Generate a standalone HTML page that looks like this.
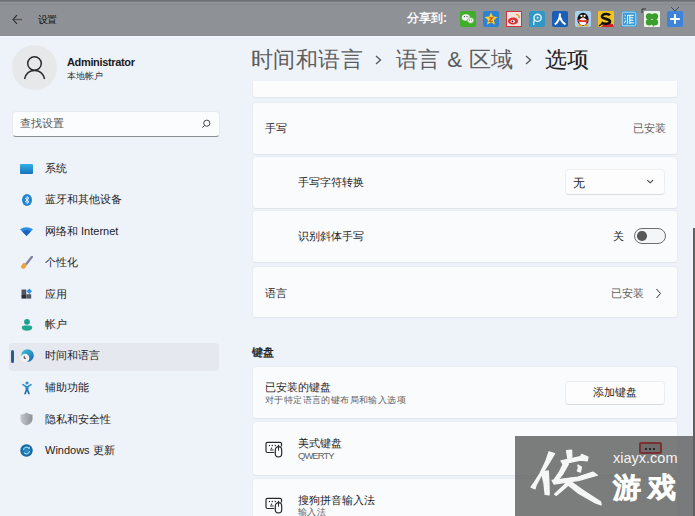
<!DOCTYPE html>
<html><head><meta charset="utf-8">
<style>
*{margin:0;padding:0;box-sizing:border-box}
html,body{width:695px;height:516px;overflow:hidden}
body{position:relative;background:#eef2f9;font-family:"Liberation Sans",sans-serif;color:#1b1b1b}
.abs{position:absolute}
.t{position:absolute;white-space:nowrap;line-height:1}
#title{left:0;top:0;width:695px;height:36px;background:#8e9195}
.card{position:absolute;left:252px;width:426px;background:#fafbfd;border-radius:4px;border:1px solid #e9ecf0;border-bottom-color:#e2e5e9}
.nav{position:absolute;left:45px;font-size:11px;color:#1d1d1d}
.ico{position:absolute;top:11px;width:16px;height:16px}
.c11{font-size:11px;color:#262626}
</style></head><body>

<div id="title" class="abs">
  <div class="abs" style="left:0;top:0;width:695px;height:1px;background:#6c6f73"></div>
  <div class="abs" style="left:0;top:1px;width:695px;height:1px;background:#7c7f83"></div>
  <div class="abs" style="left:0;top:4px;width:695px;height:1px;background:#878a8e"></div>
  <div class="abs" style="left:0;top:35px;width:695px;height:1px;background:#8a8d91"></div>
  <div class="abs" style="left:0;top:36px;width:695px;height:1px;background:#f5f8fd"></div>
  <svg class="abs" style="left:12px;top:14px" width="11" height="11" viewBox="0 0 11 11"><path d="M5 1.2 L1 5.5 L5 9.8" fill="none" stroke="#2a2a2a" stroke-width="1.1"/><path d="M1.3 5.5 H10" stroke="#555" stroke-width="1.3"/></svg>
  <div class="t" style="left:38px;top:15px;font-size:10px;letter-spacing:-0.8px;color:#111">设置</div>
  <div class="t" style="left:407px;top:12px;font-size:12px;font-weight:bold;color:#fafafa">分享到:</div>
  <!-- share icons -->
  <svg class="ico" style="left:460px" viewBox="0 0 16 16"><rect width="16" height="16" rx="2" fill="#3fae2a"/><ellipse cx="5.8" cy="6.5" rx="4" ry="3.3" fill="#f4f4f4"/><circle cx="4.4" cy="5.6" r=".6" fill="#333"/><circle cx="7" cy="5.6" r=".6" fill="#333"/><ellipse cx="10.6" cy="9.4" rx="3.3" ry="2.8" fill="#f4f4f4" stroke="#3fae2a" stroke-width=".6"/><circle cx="9.5" cy="9" r=".5" fill="#333"/><circle cx="11.7" cy="9" r=".5" fill="#333"/></svg>
  <svg class="ico" style="left:483px" viewBox="0 0 16 16"><rect width="16" height="16" rx="2" fill="#2d82d6"/><path d="M8 1.5 L9.9 5.6 L14.5 6 L11 9 L12 13.8 L8 11.3 L4 13.8 L5 9 L1.5 6 L6.1 5.6Z" fill="#f8d22c"/><path d="M6.3 6.9 H9.6 L6.4 10.2 H9.8" fill="none" stroke="#d0452b" stroke-width="1.1"/></svg>
  <svg class="ico" style="left:506px" viewBox="0 0 16 16"><rect width="16" height="16" rx="1" fill="#f3e0dc"/><rect x=".5" y=".5" width="15" height="15" fill="none" stroke="#c9363b" stroke-width="1"/><ellipse cx="7" cy="10" rx="5" ry="3.6" fill="#e22b2f"/><ellipse cx="6.7" cy="10.4" rx="2.2" ry="1.6" fill="#fff"/><circle cx="6.5" cy="10.5" r=".9" fill="#222"/><path d="M10 3.5 A3 3 0 0 1 13.2 7" fill="none" stroke="#f08a1c" stroke-width="1.2"/></svg>
  <svg class="ico" style="left:529px" viewBox="0 0 16 16"><rect width="16" height="16" rx="2" fill="#2f98c6"/><circle cx="8.6" cy="6.8" r="3.6" fill="none" stroke="#eaf6fb" stroke-width="1.4"/><circle cx="8.6" cy="6.8" r="1" fill="#eaf6fb"/><path d="M5.3 8.5 C4.8 10.5 4.6 12 4.8 14" fill="none" stroke="#eaf6fb" stroke-width="1.3"/></svg>
  <svg class="ico" style="left:552px" viewBox="0 0 16 16"><rect width="16" height="16" rx="2" fill="#1a5fb5"/><path d="M8 2.5 C8 8 6 11 2.8 13.5 M8 6 C9 9.5 11 12 13.5 13.5" fill="none" stroke="#fff" stroke-width="2"/></svg>
  <svg class="ico" style="left:575px" viewBox="0 0 16 16"><rect width="16" height="16" rx="2" fill="#a9d2ec"/><ellipse cx="8" cy="8.3" rx="5.6" ry="6.6" fill="#141414"/><ellipse cx="8" cy="10.6" rx="3.9" ry="3.6" fill="#f6f6f6"/><circle cx="6.4" cy="4.8" r="1.1" fill="#fff"/><circle cx="9.6" cy="4.8" r="1.1" fill="#fff"/><path d="M6.5 6.3 H9.5 L8 7.6Z" fill="#f2a516"/><path d="M2.8 8.5 C6 9.6 10 9.6 13.2 8.5 L13 10.5 C10 11.3 6 11.3 3 10.5Z" fill="#e3302b"/><path d="M10 10 L11.5 13 L12.5 11Z" fill="#e3302b"/><ellipse cx="5" cy="14.6" rx="2.4" ry="1" fill="#f2a516"/><ellipse cx="11" cy="14.6" rx="2.4" ry="1" fill="#f2a516"/></svg>
  <svg class="ico" style="left:598px" viewBox="0 0 16 16"><rect width="16" height="16" rx="1" fill="#f4c41e"/><path d="M3 16 C6 12 10 12 15 13 L16 16Z" fill="#d3232a"/><path d="M12 4.2 C10 2.2 3.5 2.6 4 5.8 C4.5 8.3 12 7.5 12 10.5 C12 13 6 13.6 3.5 11.5" fill="none" stroke="#111" stroke-width="2.6"/><path d="M1 15 L5 12" stroke="#111" stroke-width="1.5"/></svg>
  <svg class="ico" style="left:621px" viewBox="0 0 16 16"><rect width="16" height="16" rx="2" fill="#3d9ad6"/><rect x="1.2" y="1.2" width="13.6" height="13.6" rx="1.5" fill="none" stroke="#d6ecf8" stroke-width=".8"/><path d="M3.5 4 L4.8 5 M3.3 7.2 L4.6 8 M3.3 12.2 L4.8 9.5 M6.5 4 V12 Q6.5 13 5.8 13.3 M6.5 4.3 H12.8 M8.8 4.3 V13 M8.8 6.8 H12.3 M8.8 9.2 H12.3 M8.8 11.8 H12.8" fill="none" stroke="#fff" stroke-width="1"/></svg>
  <svg class="abs" style="left:641px;top:8px" width="19" height="20" viewBox="0 0 19 20"><path d="M1 5 V1 H5" fill="none" stroke="#333" stroke-width="1"/><rect x="3" y="3" width="16" height="16" rx="1" fill="#eef3ea"/><circle cx="8.2" cy="8.6" r="3.3" fill="#3a9d2c"/><circle cx="13.8" cy="8.6" r="3.3" fill="#3a9d2c"/><circle cx="8.2" cy="14.2" r="3.3" fill="#3a9d2c"/><circle cx="13.8" cy="14.2" r="3.3" fill="#3a9d2c"/><path d="M11 12 L12.5 18.5" stroke="#3a9d2c" stroke-width="1.2"/></svg>
  <svg class="abs" style="left:667px;top:6px" width="16" height="22" viewBox="0 0 16 22"><path d="M4 1 L8 5 L12 1" fill="none" stroke="#3b4a66" stroke-width="1"/><rect y="5" width="16" height="16" rx="2" fill="#3d84d8"/><path d="M8 8.2 V17.8 M3.2 13 H12.8" stroke="#fff" stroke-width="2"/></svg>
</div>

<!-- avatar -->
<div class="abs" style="left:12px;top:45px;width:45px;height:45px;border-radius:50%;background:#e7e8ea"></div>
<svg class="abs" style="left:20px;top:52px" width="30" height="30" viewBox="0 0 30 30"><circle cx="14.5" cy="11.5" r="6.8" fill="none" stroke="#2a2a2a" stroke-width="1.5"/><path d="M4.6 27 C6 21 10 18.6 14.6 18.6 C19 18.6 23 21 24.6 27" fill="none" stroke="#2a2a2a" stroke-width="1.5"/></svg>
<div class="t" style="left:67px;top:57px;font-size:11px;font-weight:bold;color:#1b1b1b;letter-spacing:-0.35px">Administrator</div>
<div class="t" style="left:67px;top:72px;font-size:9px;color:#333">本地帐户</div>

<!-- search -->
<div class="abs" style="left:12px;top:111px;width:208px;height:26px;background:#fbfcfd;border-radius:4px;border:1px solid #e8eaee;border-bottom:1px solid #8e8f91"></div>
<div class="t" style="left:20px;top:118px;font-size:11px;color:#5a5a5a">查找设置</div>
<svg class="abs" style="left:200px;top:118px" width="12" height="12" viewBox="0 0 12 12"><circle cx="6.8" cy="5.2" r="3.1" fill="none" stroke="#333" stroke-width=".9"/><path d="M4.6 7.4 L2.4 9.6" stroke="#333" stroke-width="1"/></svg>

<!-- nav -->
<div class="abs" style="left:9px;top:343px;width:210px;height:28px;background:#e5e8ee;border-radius:4px"></div>
<div class="abs" style="left:11px;top:350px;width:3px;height:13px;background:#2b5a9b;border-radius:2px"></div>

<svg class="abs" style="left:20px;top:164px" width="13" height="10"><defs><linearGradient id="gs" x1="0" y1="0" x2="0" y2="1"><stop offset="0" stop-color="#33b0e8"/><stop offset="1" stop-color="#1872b8"/></linearGradient></defs><rect width="13" height="10" rx="1" fill="url(#gs)"/></svg>
<svg class="abs" style="left:22px;top:194px" width="10" height="12" viewBox="0 0 10 12"><ellipse cx="5" cy="6" rx="5" ry="6" fill="#1f84d8"/><path d="M3 4 L7 7.8 L5 9.6 V2.4 L7 4.2 L3 8" fill="none" stroke="#fff" stroke-width=".9"/></svg>
<svg class="abs" style="left:20px;top:227px" width="13" height="9" viewBox="0 0 13 9"><path d="M0 2.2 Q6.5 -1.8 13 2.2 L6.5 9Z" fill="#2a8fe0"/><path d="M2.2 4.5 Q6.5 1.5 10.8 4.5 L6.5 9Z" fill="#1a62c4"/></svg>
<svg class="abs" style="left:20px;top:256px" width="13" height="13" viewBox="0 0 13 13"><path d="M12 0.8 L6.3 8" stroke="#7f84a3" stroke-width="2.3" stroke-linecap="round"/><ellipse cx="3.8" cy="10" rx="3" ry="2.3" transform="rotate(-50 3.8 10)" fill="#eba53e"/></svg>
<svg class="abs" style="left:21px;top:288px" width="12" height="11" viewBox="0 0 12 11"><rect x="0.5" y="1.5" width="4.8" height="4.6" fill="#4f5662"/><rect x="0.5" y="6.2" width="4.8" height="4.4" fill="#2c3037"/><rect x="5.4" y="6.2" width="4.8" height="4.4" fill="#545a64"/><path d="M8.3 0.5 L11 3.2 L8.3 5.9 L5.6 3.2Z" fill="#2f8fe0"/></svg>
<svg class="abs" style="left:21px;top:318px" width="12" height="13" viewBox="0 0 12 13"><circle cx="6" cy="3.8" r="2.9" fill="#1f9e8e"/><path d="M0.8 9.8 C0.8 8.2 2 7.5 3.5 7.5 H8.5 C10 7.5 11.2 8.2 11.2 9.8 C11.2 11.8 9 12.8 6 12.8 C3 12.8 0.8 11.8 0.8 9.8Z" fill="#22a892"/></svg>
<svg class="abs" style="left:20px;top:349px" width="14" height="14" viewBox="0 0 14 14"><defs><linearGradient id="gt" x1="0" y1="0" x2="1" y2="1"><stop offset="0" stop-color="#3fc4d8"/><stop offset="1" stop-color="#1766b3"/></linearGradient></defs><circle cx="7.5" cy="6.5" r="6.3" fill="url(#gt)"/><circle cx="5" cy="9" r="4.3" fill="#f1f1f3"/><path d="M4.2 7 V9.3 H6" fill="none" stroke="#333" stroke-width=".9"/></svg>
<svg class="abs" style="left:22px;top:380.5px" width="10" height="14" viewBox="0 0 10 14"><defs><linearGradient id="ga" x1="0" y1="0" x2="0" y2="1"><stop offset="0" stop-color="#2a8fd0"/><stop offset="1" stop-color="#1a5a98"/></linearGradient></defs><circle cx="5" cy="2" r="1.6" fill="#2a8fd0"/><path d="M1 3.6 L5 6.2 L9 3.6" fill="none" stroke="#2a8fd0" stroke-width="1.6" stroke-linecap="round"/><path d="M3.4 5.8 H6.6 L6.4 8.8 L7.9 13.2 H6.3 L5 10 L3.7 13.2 H2.1 L3.6 8.8Z" fill="url(#ga)"/></svg>
<svg class="abs" style="left:20px;top:412px" width="13" height="14" viewBox="0 0 13 14"><defs><linearGradient id="gh" x1="0" y1="0" x2="1" y2="0"><stop offset="0" stop-color="#c4c7cc"/><stop offset="0.5" stop-color="#a9adb3"/><stop offset="1" stop-color="#8d9299"/></linearGradient></defs><path d="M6.5 0.5 C8.5 2 10.5 2.5 12.5 2.5 V7 C12.5 10.5 9.5 12.5 6.5 13.5 C3.5 12.5 0.5 10.5 0.5 7 V2.5 C2.5 2.5 4.5 2 6.5 0.5Z" fill="url(#gh)"/></svg>
<svg class="abs" style="left:20px;top:444px" width="13" height="13" viewBox="0 0 13 13"><defs><radialGradient id="gu"><stop offset="0" stop-color="#2c94cc"/><stop offset="1" stop-color="#17609c"/></radialGradient></defs><circle cx="6.5" cy="6.5" r="6.2" fill="url(#gu)"/><path d="M3.5 6 A3 3 0 0 1 9 4.5 M9.5 7 A3 3 0 0 1 4 8.5" fill="none" stroke="#9fdcf6" stroke-width="1.1"/><path d="M8 3.5 L9.5 4.8 L9.3 3" fill="none" stroke="#9fdcf6" stroke-width=".9"/></svg>

<div class="nav t" style="top:163px">系统</div>
<div class="nav t" style="top:194px">蓝牙和其他设备</div>
<div class="nav t" style="top:226px">网络和 Internet</div>
<div class="nav t" style="top:257px">个性化</div>
<div class="nav t" style="top:289px">应用</div>
<div class="nav t" style="top:319px">帐户</div>
<div class="nav t" style="top:350px">时间和语言</div>
<div class="nav t" style="top:382px">辅助功能</div>
<div class="nav t" style="top:414px">隐私和安全性</div>
<div class="nav t" style="top:445px">Windows 更新</div>

<!-- header -->
<div class="t" style="left:251px;top:49px;font-size:22px;letter-spacing:0.4px;color:#5d5d5d">时间和语言</div>
<svg class="abs" style="left:375px;top:55px" width="7" height="10" viewBox="0 0 7 10"><path d="M1 1 L5.5 5 L1 9" fill="none" stroke="#555" stroke-width="1.3"/></svg>
<div class="t" style="left:396px;top:49px;font-size:22px;letter-spacing:0.4px;color:#5d5d5d">语言 &amp; 区域</div>
<svg class="abs" style="left:525px;top:55px" width="7" height="10" viewBox="0 0 7 10"><path d="M1 1 L5.5 5 L1 9" fill="none" stroke="#555" stroke-width="1.3"/></svg>
<div class="t" style="left:545px;top:49px;font-size:22px;letter-spacing:0.4px;color:#1b1b1b">选项</div>

<!-- cards -->
<div class="card" style="top:81px;height:17px;border-radius:0 0 4px 4px;border-top:none;background:#fcfcfd"></div>
<div class="card" style="top:102px;height:53px"></div>
<div class="t c11" style="left:265px;top:123px">手写</div>
<div class="t" style="left:633px;top:123px;font-size:11px;color:#5d5d5d">已安装</div>

<div class="card" style="top:156px;height:53px"></div>
<div class="t c11" style="left:298px;top:177px">手写字符转换</div>
<div class="abs" style="left:565px;top:169px;width:100px;height:26px;background:#fdfdfe;border:1px solid #eceef0;border-bottom-color:#dadcdf;border-radius:4px"></div>
<div class="t" style="left:573px;top:177px;font-size:12px;color:#1f1f1f">无</div>
<svg class="abs" style="left:646px;top:179px" width="9" height="6" viewBox="0 0 9 6"><path d="M1.3 1.2 L4.2 3.8 L7.1 1.2" fill="none" stroke="#3a3a3a" stroke-width="1.1"/></svg>

<div class="card" style="top:210px;height:53px"></div>
<div class="t c11" style="left:298px;top:231px">识别斜体手写</div>
<div class="t" style="left:613px;top:231px;font-size:11px;color:#1f1f1f">关</div>
<div class="abs" style="left:634px;top:228px;width:32px;height:16px;border:1px solid #6e6e6e;border-radius:8px;background:#f4f5f7"></div>
<div class="abs" style="left:637px;top:231px;width:9.5px;height:9.5px;border-radius:50%;background:#575757"></div>

<div class="card" style="top:266px;height:52px"></div>
<div class="t c11" style="left:265px;top:288px">语言</div>
<div class="t" style="left:611px;top:288px;font-size:11px;color:#5d5d5d">已安装</div>
<svg class="abs" style="left:655px;top:288px" width="7" height="11" viewBox="0 0 7 11"><path d="M1.5 1 L5.5 5.5 L1.5 10" fill="none" stroke="#333" stroke-width="1"/></svg>

<div class="t" style="left:252px;top:347px;font-size:11px;color:#1b1b1b;-webkit-text-stroke:0.35px #1b1b1b">键盘</div>

<div class="card" style="top:366px;height:53px"></div>
<div class="t c11" style="left:265px;top:382px">已安装的键盘</div>
<div class="t" style="left:265px;top:396px;font-size:9px;letter-spacing:0.4px;color:#626262">对于特定语言的键布局和输入选项</div>
<div class="abs" style="left:565px;top:381px;width:100px;height:24px;background:#fdfdfe;border:1px solid #eceef0;border-bottom-color:#dadcdf;border-radius:4px"></div>
<div class="t" style="left:593px;top:387px;font-size:11px;color:#1f1f1f">添加键盘</div>

<div class="card" style="top:421px;height:55px"></div>
<svg class="abs kb" style="left:265px;top:441px" width="18" height="17" viewBox="0 0 18 17"><path d="M9.3 11.5 H2.5 A1.5 1.5 0 0 1 1 10 V2.8 A1.5 1.5 0 0 1 2.5 1.3 H15 A1.5 1.5 0 0 1 16.5 2.8 V5.5" fill="none" stroke="#2a2a2a" stroke-width="1.2"/><rect x="10.3" y="5.7" width="6.4" height="10.2" rx="3.2" fill="none" stroke="#2a2a2a" stroke-width="1.2"/><path d="M13.5 5.8 V9.5" stroke="#2a2a2a" stroke-width="1"/><circle cx="4.5" cy="4.5" r=".7" fill="#2a2a2a"/><circle cx="7.3" cy="4.5" r=".7" fill="#2a2a2a"/><circle cx="10.3" cy="4.5" r=".7" fill="#2a2a2a"/><circle cx="13.5" cy="4.5" r=".7" fill="#2a2a2a"/><circle cx="6.5" cy="7.3" r=".7" fill="#2a2a2a"/><path d="M5 9 H8.5" stroke="#2a2a2a" stroke-width="1"/></svg>
<div class="t c11" style="left:298px;top:438px">美式键盘</div>
<div class="t" style="left:298px;top:451px;font-size:9.5px;letter-spacing:-1px;color:#626262">QWERTY</div>

<div class="card" style="top:478px;height:53px"></div>
<svg class="abs kb" style="left:265px;top:497px" width="18" height="17" viewBox="0 0 18 17"><path d="M9.3 11.5 H2.5 A1.5 1.5 0 0 1 1 10 V2.8 A1.5 1.5 0 0 1 2.5 1.3 H15 A1.5 1.5 0 0 1 16.5 2.8 V5.5" fill="none" stroke="#2a2a2a" stroke-width="1.2"/><rect x="10.3" y="5.7" width="6.4" height="10.2" rx="3.2" fill="none" stroke="#2a2a2a" stroke-width="1.2"/><path d="M13.5 5.8 V9.5" stroke="#2a2a2a" stroke-width="1"/><circle cx="4.5" cy="4.5" r=".7" fill="#2a2a2a"/><circle cx="7.3" cy="4.5" r=".7" fill="#2a2a2a"/><circle cx="10.3" cy="4.5" r=".7" fill="#2a2a2a"/><circle cx="13.5" cy="4.5" r=".7" fill="#2a2a2a"/><circle cx="6.5" cy="7.3" r=".7" fill="#2a2a2a"/><path d="M5 9 H8.5" stroke="#2a2a2a" stroke-width="1"/></svg>
<div class="t c11" style="left:298px;top:495px">搜狗拼音输入法</div>
<div class="t" style="left:298px;top:508px;font-size:9px;letter-spacing:0.4px;color:#626262">输入法</div>

<!-- scrollbar -->
<div class="abs" style="left:693px;top:228px;width:2px;height:288px;background:#5f6062"></div>

<!-- watermark -->
<div class="abs" style="left:515px;top:436px;width:180px;height:80px;background:rgba(95,95,95,0.82)"></div>
<div class="abs" style="left:639px;top:442px;width:23px;height:12px;border:2px solid #7b3034;border-radius:2px;background:#6c6c6c"></div>
<div class="abs" style="left:645px;top:448px;width:2px;height:2px;background:#262626"></div>
<div class="abs" style="left:649px;top:448px;width:2px;height:2px;background:#262626"></div>
<div class="abs" style="left:653px;top:448px;width:2px;height:2px;background:#262626"></div>
<div class="t" style="left:613px;top:451px;font-size:14.5px;color:#f4f4f4">xiayx.com</div>
<div class="t" style="left:613px;top:474px;font-size:28px;letter-spacing:7px;color:#fff;-webkit-text-stroke:1.8px #fff">游戏</div>
<svg class="abs" style="left:525px;top:445px" width="85" height="65" viewBox="0 0 675 516">
<g fill="#f6f6f6" stroke="#f6f6f6" stroke-width="10" stroke-linejoin="round">
<path d="M190 55 L235 68 L190 145 L130 240 L88 320 L80 348 L48 335 L72 300 L120 225 L165 130Z"/>
<path d="M130 215 L185 205 L190 300 L192 395 L160 392 L150 300Z"/>
<path d="M330 45 L370 40 L372 95 L340 110Z"/>
<path d="M285 125 L440 92 L450 75 L500 95 L495 125 L440 120 L300 150Z"/>
<path d="M310 140 L345 150 L300 230 L250 290 L228 280 L270 220Z"/>
<path d="M420 160 L448 175 L440 215 L415 205 L425 185Z"/>
<path d="M215 280 L420 255 L540 215 L575 240 L430 280 L230 310Z"/>
<path d="M360 265 L395 275 L320 340 L250 400 L235 390 L300 330Z"/>
<path d="M320 300 L370 295 L460 360 L600 450 L605 475 L560 460 L420 380Z"/>
</g></svg>
</body></html>
